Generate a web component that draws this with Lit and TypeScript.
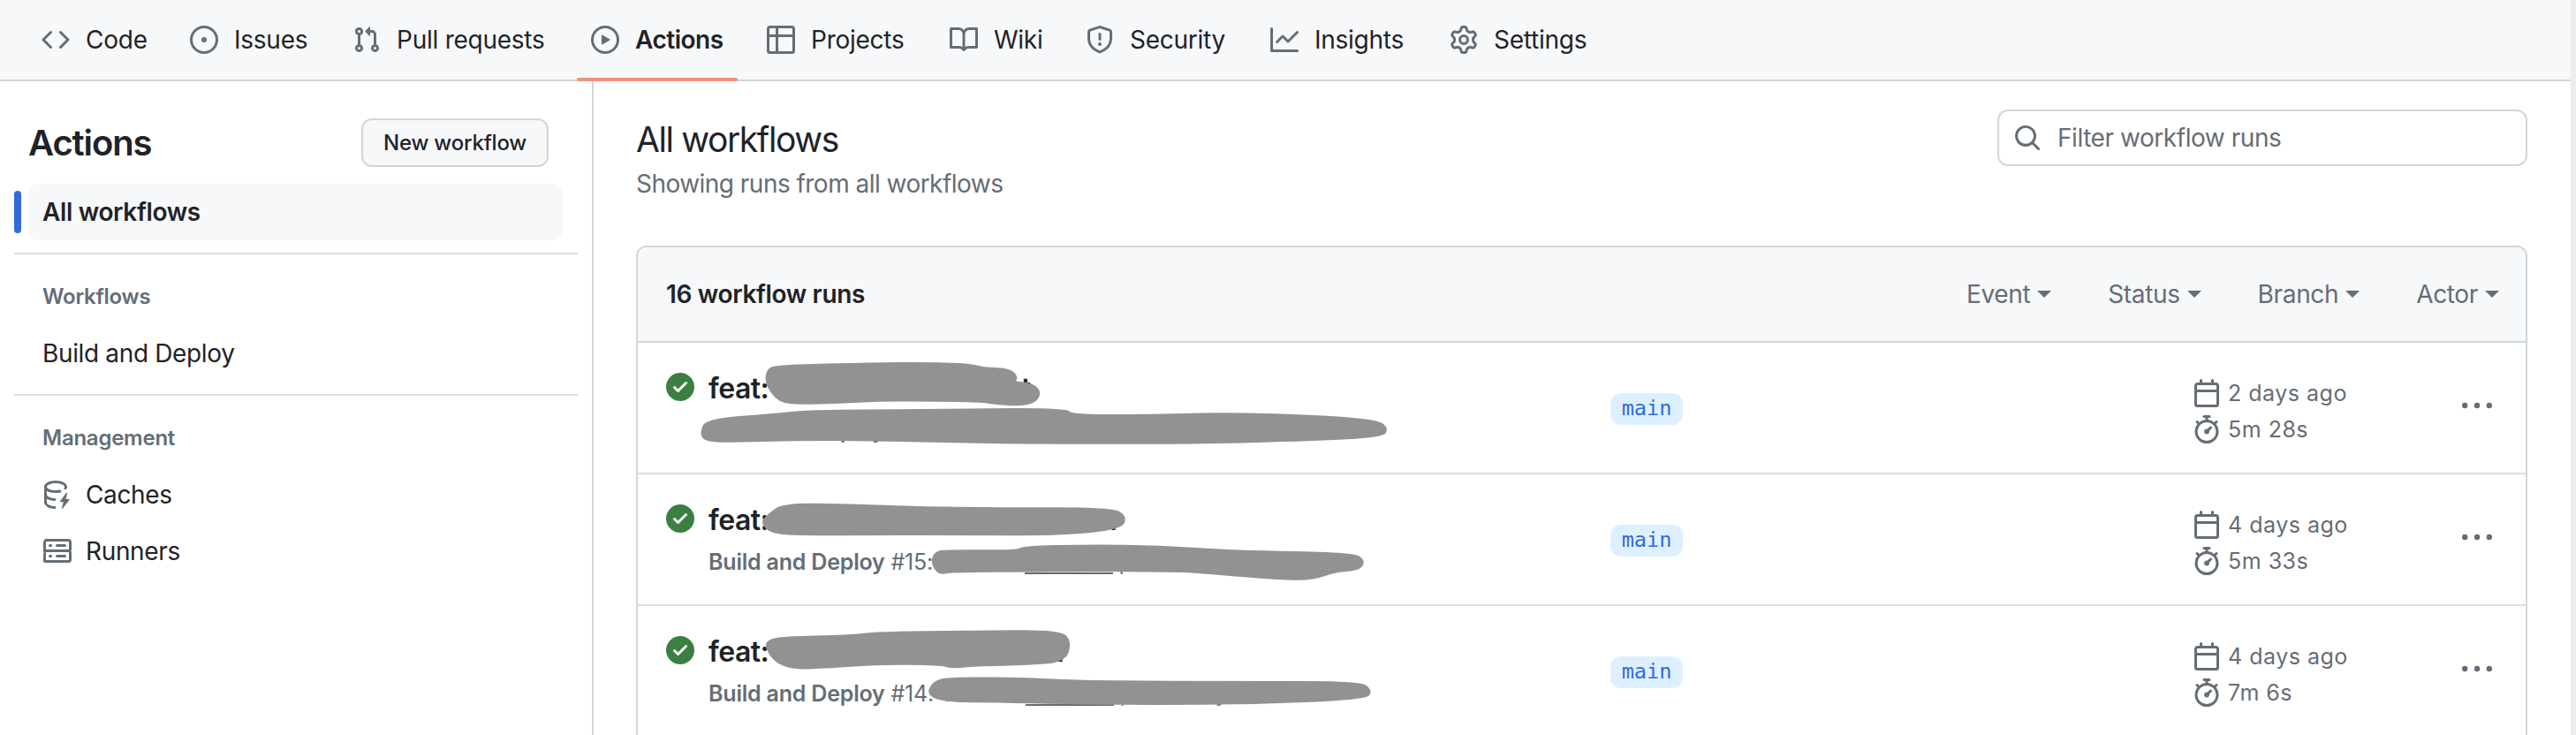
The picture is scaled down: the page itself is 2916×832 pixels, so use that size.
import { LitElement, html, css, svg } from "lit";
import { customElement } from "lit/decorators.js";

const P: Record<string, ReturnType<typeof svg>> = {
  code: svg`<path d="m11.28 3.22 4.25 4.25a.75.75 0 0 1 0 1.06l-4.25 4.25a.749.749 0 0 1-1.06-1.06L13.94 8l-3.72-3.72a.749.749 0 0 1 1.06-1.06Zm-6.56 0a.75.75 0 0 1 1.06 1.06L2.06 8l3.72 3.72a.749.749 0 0 1-1.06 1.06L.47 8.53a.75.75 0 0 1 0-1.06Z"/>`,
  issue: svg`<path d="M8 9.5a1.5 1.5 0 1 0 0-3 1.5 1.5 0 0 0 0 3Z"/><path d="M8 0a8 8 0 1 1 0 16A8 8 0 0 1 8 0ZM1.5 8a6.5 6.5 0 1 0 13 0 6.5 6.5 0 0 0-13 0Z"/>`,
  pr: svg`<path d="M1.5 3.25a2.25 2.25 0 1 1 3 2.122v5.256a2.251 2.251 0 1 1-1.5 0V5.372A2.25 2.25 0 0 1 1.5 3.25Zm5.677-.177L9.573.677A.25.25 0 0 1 10 .854V2.5h1A2.5 2.5 0 0 1 13.5 5v5.628a2.251 2.251 0 1 1-1.5 0V5a1 1 0 0 0-1-1h-1v1.646a.25.25 0 0 1-.427.177L7.177 3.427a.25.25 0 0 1 0-.354ZM3.75 2.5a.75.75 0 1 0 0 1.5.75.75 0 0 0 0-1.5Zm0 9.5a.75.75 0 1 0 0 1.5.75.75 0 0 0 0-1.5Zm8.25.75a.75.75 0 1 0 1.5 0 .75.75 0 0 0-1.5 0Z"/>`,
  play: svg`<path d="M8 0a8 8 0 1 1 0 16A8 8 0 0 1 8 0ZM1.5 8a6.5 6.5 0 1 0 13 0 6.5 6.5 0 0 0-13 0Zm4.879-2.773 4.264 2.559a.25.25 0 0 1 0 .428l-4.264 2.559A.25.25 0 0 1 6 10.559V5.442a.25.25 0 0 1 .379-.215Z"/>`,
  table: svg`<path d="M0 1.75C0 .784.784 0 1.75 0h12.5C15.216 0 16 .784 16 1.75v12.5A1.75 1.75 0 0 1 14.25 16H1.75A1.75 1.75 0 0 1 0 14.25ZM6.5 6.5v8h7.75a.25.25 0 0 0 .25-.25V6.5Zm8-1.5V1.75a.25.25 0 0 0-.25-.25H6.5V5Zm-13 1.5v7.75c0 .138.112.25.25.25H5v-8ZM5 5V1.5H1.75a.25.25 0 0 0-.25.25V5Z"/>`,
  book: svg`<path d="M0 1.75A.75.75 0 0 1 .75 1h4.253c1.227 0 2.317.59 3 1.501A3.743 3.743 0 0 1 11.006 1h4.245a.75.75 0 0 1 .75.75v10.5a.75.75 0 0 1-.75.75h-4.507a2.25 2.25 0 0 0-1.591.659l-.622.621a.75.75 0 0 1-1.06 0l-.622-.621A2.25 2.25 0 0 0 5.258 13H.75a.75.75 0 0 1-.75-.75Zm7.251 10.324.004-5.073-.002-2.253A2.25 2.25 0 0 0 5.003 2.5H1.5v9h3.757a3.75 3.75 0 0 1 1.994.574ZM8.755 4.75l-.004 7.322a3.752 3.752 0 0 1 1.992-.572H14.5v-9h-3.495a2.25 2.25 0 0 0-2.25 2.25Z"/>`,
  shield: svg`<path d="M7.467.133a1.748 1.748 0 0 1 1.066 0l5.25 1.68A1.75 1.75 0 0 1 15 3.48V7c0 1.566-.32 3.182-1.303 4.682-.983 1.498-2.585 2.813-5.032 3.855a1.697 1.697 0 0 1-1.33 0c-2.447-1.042-4.049-2.357-5.032-3.855C1.32 10.182 1 8.566 1 7V3.48a1.75 1.75 0 0 1 1.217-1.667Zm.61 1.429a.25.25 0 0 0-.153 0l-5.25 1.68a.25.25 0 0 0-.174.238V7c0 1.358.275 2.666 1.057 3.86.784 1.194 2.121 2.34 4.366 3.297a.196.196 0 0 0 .154 0c2.245-.956 3.582-2.104 4.366-3.298C13.225 9.666 13.5 8.36 13.5 7V3.48a.251.251 0 0 0-.174-.237l-5.25-1.68ZM8.75 4.75v3a.75.75 0 0 1-1.5 0v-3a.75.75 0 0 1 1.5 0ZM9 10.5a1 1 0 1 1-2 0 1 1 0 0 1 2 0Z"/>`,
  graph: svg`<path d="M1.5 1.75V13.5h13.75a.75.75 0 0 1 0 1.5H.75a.75.75 0 0 1-.75-.75V1.75a.75.75 0 0 1 1.5 0Zm14.28 2.53-5.25 5.25a.75.75 0 0 1-1.06 0L7 7.06 4.28 9.78a.751.751 0 0 1-1.042-.018.751.751 0 0 1-.018-1.042l3.25-3.25a.75.75 0 0 1 1.06 0L10 7.94l4.72-4.72a.751.751 0 0 1 1.042.018.751.751 0 0 1 .018 1.042Z"/>`,
  gear: svg`<path d="M8 0a8.2 8.2 0 0 1 .701.031C9.444.095 9.99.645 10.16 1.29l.288 1.107c.018.066.079.158.212.224.231.114.454.243.668.386.123.082.233.09.299.071l1.103-.303c.644-.176 1.392.021 1.82.63.27.385.506.792.704 1.218.315.675.111 1.422-.364 1.891l-.814.806c-.049.048-.098.147-.088.294.016.257.016.515 0 .772-.01.147.038.246.088.294l.814.806c.475.469.679 1.216.364 1.891a7.977 7.977 0 0 1-.704 1.217c-.428.61-1.176.807-1.82.63l-1.102-.302c-.067-.019-.177-.011-.3.071a5.909 5.909 0 0 1-.668.386c-.133.066-.194.158-.211.224l-.29 1.106c-.168.646-.715 1.196-1.458 1.26a8.006 8.006 0 0 1-1.402 0c-.743-.064-1.289-.614-1.458-1.26l-.289-1.106c-.018-.066-.079-.158-.212-.224a5.738 5.738 0 0 1-.668-.386c-.123-.082-.233-.09-.299-.071l-1.103.303c-.644.176-1.392-.021-1.82-.63a8.12 8.12 0 0 1-.704-1.218c-.315-.675-.111-1.422.363-1.891l.815-.806c.05-.048.098-.147.088-.294a6.214 6.214 0 0 1 0-.772c.01-.147-.038-.246-.088-.294l-.815-.806C.635 6.045.431 5.298.746 4.623a7.92 7.92 0 0 1 .704-1.217c.428-.61 1.176-.807 1.82-.63l1.102.302c.067.019.177.011.3-.071.214-.143.437-.272.668-.386.133-.066.194-.158.211-.224l.29-1.106C6.009.645 6.556.095 7.299.03 7.53.01 7.764 0 8 0Zm-.571 1.525c-.036.003-.108.036-.137.146l-.289 1.105c-.147.561-.549.967-.998 1.189-.173.086-.34.183-.5.29-.417.278-.97.423-1.529.27l-1.103-.303c-.109-.03-.175.016-.195.045-.22.312-.412.644-.573.99-.014.031-.021.11.059.19l.815.806c.411.406.562.957.53 1.456a4.709 4.709 0 0 0 0 .582c.032.499-.119 1.05-.53 1.456l-.815.806c-.081.08-.073.159-.059.19.162.346.353.677.573.989.02.03.085.076.195.046l1.102-.303c.56-.153 1.113-.008 1.53.27.161.107.328.204.501.29.447.222.85.629.997 1.189l.289 1.105c.029.109.101.143.137.146a6.6 6.6 0 0 0 1.142 0c.036-.003.108-.036.137-.146l.289-1.105c.147-.561.549-.967.998-1.189.173-.086.34-.183.5-.29.417-.278.97-.423 1.529-.27l1.103.303c.109.029.175-.016.195-.045.22-.313.411-.644.573-.99.014-.031.021-.11-.059-.19l-.815-.806c-.411-.406-.562-.957-.53-1.456a4.709 4.709 0 0 0 0-.582c-.032-.499.119-1.05.53-1.456l.815-.806c.081-.08.073-.159.059-.19a6.464 6.464 0 0 0-.573-.989c-.02-.03-.085-.076-.195-.046l-1.102.303c-.56.153-1.113.008-1.53-.27a4.44 4.44 0 0 0-.501-.29c-.447-.222-.85-.629-.997-1.189l-.289-1.105c-.029-.11-.101-.143-.137-.146a6.6 6.6 0 0 0-1.142 0ZM11 8a3 3 0 1 1-6 0 3 3 0 0 1 6 0ZM9.5 8a1.5 1.5 0 1 0-3.001.001A1.5 1.5 0 0 0 9.5 8Z"/>`,
  cache: svg`<path d="M7 0C10.4 0 13.5 1.4 13.5 3.5c0 .5-.1.9-.4 1.3a.75.75 0 0 1-1.24-.84c.1-.16.14-.3.14-.46 0-.3-.3-.8-1.2-1.23C9.9 1.8 8.55 1.5 7 1.5s-2.9.3-3.8.77C2.3 2.7 2 3.2 2 3.5s.3.8 1.2 1.23C4.1 5.2 5.45 5.5 7 5.5c.8 0 1.55-.08 2.2-.22a.75.75 0 1 1 .32 1.46c-.78.17-1.62.26-2.52.26-1.96 0-3.75-.4-5-1.13V8c0 .3.26.75 1.13 1.2.82.42 2 .72 3.4.8a.75.75 0 1 1-.08 1.5c-1.57-.09-3-.44-4.05-.98L2 10.4v2.1c0 .3.26.75 1.13 1.2.82.42 2 .72 3.4.8a.75.75 0 1 1-.08 1.5c-1.57-.09-3-.44-4.05-.98C1.3 13.95.5 13.3.5 12.5v-9C.5 1.4 3.6 0 7 0Z"/><path d="m13 7-3.5 4.6a.3.3 0 0 0 .24.48H11.4l-.9 3.4c-.08.32.3.5.5.25l3.75-4.75a.3.3 0 0 0-.24-.48H12.8l.75-3.25c.07-.3-.35-.5-.55-.25Z"/>`,
  server: svg`<path d="M1.75 1h12.5c.966 0 1.75.784 1.75 1.75v4c0 .372-.116.717-.314 1 .198.283.314.628.314 1v4a1.75 1.75 0 0 1-1.75 1.75H1.75A1.75 1.75 0 0 1 0 13.75v-4c0-.372.116-.717.314-1a1.739 1.739 0 0 1-.314-1v-4C0 1.784.784 1 1.75 1ZM1.5 2.75v4c0 .138.112.25.25.25h12.5a.25.25 0 0 0 .25-.25v-4a.25.25 0 0 0-.25-.25H1.75a.25.25 0 0 0-.25.25Zm.25 5.75a.25.25 0 0 0-.25.25v4c0 .138.112.25.25.25h12.5a.25.25 0 0 0 .25-.25v-4a.25.25 0 0 0-.25-.25ZM7 4.75A.75.75 0 0 1 7.75 4h4.5a.75.75 0 0 1 0 1.5h-4.5A.75.75 0 0 1 7 4.75ZM7.75 10h4.5a.75.75 0 0 1 0 1.5h-4.5a.75.75 0 0 1 0-1.5ZM3 4.75A.75.75 0 0 1 3.75 4h.5a.75.75 0 0 1 0 1.5h-.5A.75.75 0 0 1 3 4.75ZM3.75 10h.5a.75.75 0 0 1 0 1.5h-.5a.75.75 0 0 1 0-1.5Z"/>`,
  search: svg`<path d="M10.68 11.74a6 6 0 0 1-7.922-8.982 6 6 0 0 1 8.982 7.922l3.04 3.04a.749.749 0 0 1-.326 1.275.749.749 0 0 1-.734-.215ZM11.5 7a4.499 4.499 0 1 0-8.997 0A4.499 4.499 0 0 0 11.5 7Z"/>`,
  check: svg`<path d="M8 16A8 8 0 1 1 8 0a8 8 0 0 1 0 16Zm3.78-9.72a.751.751 0 0 0-.018-1.042.751.751 0 0 0-1.042-.018L6.75 9.19 5.28 7.72a.751.751 0 0 0-1.042.018.751.751 0 0 0-.018 1.042l2 2a.75.75 0 0 0 1.06 0Z"/>`,
  calendar: svg`<path d="M4.75 0a.75.75 0 0 1 .75.75V2h5V.75a.75.75 0 0 1 1.5 0V2h1.25c.966 0 1.75.784 1.75 1.75v10.5A1.75 1.75 0 0 1 13.25 16H2.75A1.75 1.75 0 0 1 1 14.25V3.75C1 2.784 1.784 2 2.75 2H4V.75A.75.75 0 0 1 4.75 0ZM2.5 7.5v6.75c0 .138.112.25.25.25h10.5a.25.25 0 0 0 .25-.25V7.5Zm10.75-4H2.75a.25.25 0 0 0-.25.25V6h11V3.75a.25.25 0 0 0-.25-.25Z"/>`,
  stopwatch: svg`<path d="M5.75.75A.75.75 0 0 1 6.5 0h3a.75.75 0 0 1 0 1.5h-.75v1l-.001.041a6.724 6.724 0 0 1 3.464 1.435l.007-.006.75-.75a.749.749 0 0 1 1.275.326.749.749 0 0 1-.215.734l-.75.75-.006.007a6.75 6.75 0 1 1-10.548 0L2.72 5.03l-.75-.75a.751.751 0 0 1 .018-1.042.751.751 0 0 1 1.042-.018l.75.75.007.006A6.72 6.72 0 0 1 7.25 2.541V1.5H6.5a.75.75 0 0 1-.75-.75ZM8 14.5a5.25 5.25 0 1 0-.001-10.501A5.25 5.25 0 0 0 8 14.5Zm.389-6.7 1.33-1.33a.75.75 0 1 1 1.061 1.06L9.45 8.861A1.503 1.503 0 0 1 8 10.75a1.499 1.499 0 1 1 .389-2.95Z"/>`,
  kebab: svg`<path d="M8 9.5a1.5 1.5 0 1 0 0-3 1.5 1.5 0 0 0 0 3ZM1.5 9.5a1.5 1.5 0 1 0 0-3 1.5 1.5 0 0 0 0 3Zm13 0a1.5 1.5 0 1 0 0-3 1.5 1.5 0 0 0 0 3Z"/>`,
};

const icon = (name: string, cls = "") =>
  html`<svg class="icon ${cls}" viewBox="0 0 16 16" aria-hidden="true">${P[name]}</svg>`;

const TABS: [string, string, number][] = [
  ["code", "Code", 168],
  ["issue", "Issues", 184],
  ["pr", "Pull requests", 270],
  ["play", "Actions", 199],
  ["table", "Projects", 207],
  ["book", "Wiki", 154],
  ["shield", "Security", 209],
  ["graph", "Insights", 203],
  ["gear", "Settings", 200],
];

const RUNS = [
  { n: 16, date: "2 days ago", dur: "5m 28s", tail: "t", tailAt: 354 },
  { n: 15, date: "4 days ago", dur: "5m 33s", tail: "on", tailAt: 424 },
  { n: 14, date: "4 days ago", dur: "7m 6s", tail: "t", tailAt: 390 },
];

type Pt = [number, number];

// Redaction scribbles, traced as [x, y] in page pixels.
const scribble = (pts: Pt[], top: number) => {
  const p = pts.map(([x, y]): Pt => [720 + x / 1.568, top + y / 3]);
  const mid = (a: Pt, b: Pt): Pt => [(a[0] + b[0]) / 2, (a[1] + b[1]) / 2];
  const f = (a: Pt) => `${a[0].toFixed(1)} ${a[1].toFixed(1)}`;
  let d = `M${f(mid(p[p.length - 1], p[0]))}`;
  p.forEach((c, i) => {
    d += ` Q${f(c)} ${f(mid(c, p[(i + 1) % p.length]))}`;
  });
  return d + " Z";
};

const BLOBS: string[] = [
  scribble([[250,436],[350,430],[480,425],[590,428],[615,443],[660,445],[676,470],[667,490],[702,495],[716,522],[708,552],[680,564],[640,558],[610,550],[530,548],[440,547],[350,555],[270,559],[248,538],[232,490],[234,448]], 270),
  scribble([[128,617],[240,601],[310,587],[500,586],[762,580],[772,602],[900,604],[1040,596],[1200,604],[1314,620],[1332,645],[1324,670],[1200,682],[1000,692],[850,692],[680,692],[540,687],[350,679],[210,685],[124,688],[116,655]], 270),
  scribble([[236,100],[262,64],[380,67],[500,76],[640,79],[845,79],[868,105],[860,142],[760,163],[600,162],[420,162],[300,163],[242,158],[224,125]], 550),
  scribble([[532,228],[550,222],[675,224],[690,209],[800,205],[930,207],[1060,225],[1274,231],[1292,258],[1280,283],[1242,287],[1202,314],[1150,315],[1020,294],[960,286],[700,286],[555,288],[538,297],[526,260]], 550),
  scribble([[236,528],[260,517],[380,512],[430,500],[600,497],[752,494],[770,530],[760,593],[700,603],[600,607],[558,615],[542,603],[430,602],[330,615],[278,618],[246,592],[232,545]], 550),
  scribble([[530,666],[560,654],[700,657],[800,667],[1100,669],[1284,669],[1304,695],[1294,720],[1100,737],[900,738],[760,736],[640,730],[556,729],[518,710]], 550),
];

@customElement("app-root")
export class AppRoot extends LitElement {
  static styles = css`
    :host {
      display: flex;
      position: relative;
      width: 2916px;
      height: 832px;
      overflow: hidden;
      background: #fff;
      color: #1f2328;
      font-family: Inter, "Liberation Sans", sans-serif;
      font-size: 28px;
      --muted: #656d76;
      --line: #d0d7de;
      --soft: #d8dee4;
    }
    * {
      box-sizing: border-box;
    }
    .wrap {
      flex: 1;
      min-width: 0;
    }
    .scroll {
      width: 6px;
      flex: none;
      background: #ededed;
    }
    .icon {
      width: 32px;
      height: 32px;
      flex: none;
      fill: var(--muted);
      display: block;
    }
    .nav {
      height: 92px;
      background: #f6f8fa;
      border-bottom: 2px solid var(--line);
      display: flex;
      padding-left: 31px;
    }
    .tab {
      position: relative;
      display: flex;
      align-items: center;
      gap: 18px;
      padding-left: 16px;
      height: 90px;
      flex: none;
      letter-spacing: -0.25px;
      white-space: nowrap;
    }
    .tab.on {
      font-weight: 600;
      letter-spacing: -0.5px;
    }
    .tab.on::after {
      content: "";
      position: absolute;
      left: 0;
      right: 17px;
      bottom: -2px;
      height: 4px;
      border-radius: 2px;
      background: #f2917a;
    }
    .page {
      display: flex;
      height: 740px;
    }
    .side {
      width: 672px;
      flex: none;
      border-right: 2px solid var(--line);
      padding: 42px 16px 0;
    }
    .side-head {
      display: flex;
      align-items: center;
      justify-content: space-between;
      padding: 0 33px 0 16px;
      height: 55px;
    }
    .side-head h2 {
      margin: 0;
      font-size: 40px;
      font-weight: 600;
      letter-spacing: -1.1px;
    }
    .btn {
      width: 212px;
      height: 55px;
      display: flex;
      align-items: center;
      justify-content: center;
      background: #f6f8fa;
      border: 2px solid var(--line);
      border-radius: 12px;
      font-size: 24px;
      font-weight: 500;
      letter-spacing: -0.2px;
    }
    .item {
      display: flex;
      align-items: center;
      gap: 16px;
      height: 64px;
      padding-left: 32px;
      letter-spacing: -0.35px;
      white-space: nowrap;
    }
    .item .icon {
      margin-left: 1px;
    }
    .active {
      position: relative;
      margin: 19px 17px 0 16px;
      padding-left: 16px;
      background: #f6f8fa;
      border-radius: 12px;
      font-weight: 600;
    }
    .active::before {
      content: "";
      position: absolute;
      left: -16px;
      top: 8px;
      width: 8px;
      height: 48px;
      border-radius: 4px;
      background: #2f6bdd;
    }
    .sep {
      height: 2px;
      background: var(--soft);
      margin-top: 14px;
    }
    .group {
      color: var(--muted);
      font-size: 24px;
      font-weight: 600;
      letter-spacing: -0.25px;
      padding-left: 32px;
      margin: 33px 0 17px;
      line-height: 30px;
    }
    .main {
      flex: 1;
      padding: 32px 49px 0 48px;
      min-width: 0;
    }
    .main-head {
      display: flex;
      justify-content: space-between;
      align-items: flex-start;
      height: 154px;
    }
    .main-head h1 {
      margin: 0;
      font-size: 39px;
      font-weight: 400;
      line-height: 52px;
      letter-spacing: -1.4px;
      padding-top: 8px;
    }
    .main-head p {
      margin: 4px 0 0;
      color: var(--muted);
      line-height: 40px;
      letter-spacing: -0.53px;
    }
    .filter {
      width: 600px;
      height: 64px;
      border: 2px solid var(--line);
      border-radius: 12px;
      display: flex;
      align-items: center;
      gap: 18px;
      padding-left: 16px;
      color: var(--muted);
      letter-spacing: -0.45px;
    }
    .box {
      border: 2px solid var(--line);
      border-bottom: 0;
      border-radius: 12px 12px 0 0;
    }
    .box-head {
      height: 108px;
      background: #f6f8fa;
      border-bottom: 2px solid var(--line);
      border-radius: 10px 10px 0 0;
      display: flex;
      align-items: center;
      justify-content: space-between;
      padding: 0 30px 0 32px;
    }
    .box-head strong {
      font-weight: 600;
      letter-spacing: -0.35px;
    }
    .filters {
      display: flex;
      gap: 64px;
      color: var(--muted);
      letter-spacing: -0.35px;
    }
    .f {
      display: flex;
      align-items: center;
      gap: 8px;
    }
    .caret {
      width: 0;
      height: 0;
      border: 8px solid transparent;
      border-top-color: var(--muted);
      border-bottom: 0;
    }
    .row {
      display: grid;
      grid-template-columns: 1069px 659px 1fr 34px;
      height: 149px;
      padding: 0 38px 0 32px;
      border-bottom: 2px solid var(--soft);
    }
    .who {
      display: grid;
      grid-template-columns: 32px 1fr;
      column-gap: 16px;
      padding-top: 34px;
      align-content: start;
    }
    .title {
      position: relative;
      font-size: 32px;
      font-weight: 600;
      line-height: 36px;
      letter-spacing: -0.5px;
    }
    .tail {
      position: absolute;
      top: 0;
    }
    .check {
      fill: #3b7f42;
    }
    .sub {
      grid-column: 2;
      margin-top: 14px;
      font-size: 25px;
      line-height: 30px;
      color: var(--muted);
      letter-spacing: -0.2px;
      white-space: nowrap;
    }
    .sub b {
      font-weight: 600;
    }
    .sha {
      display: inline-block;
      vertical-align: top;
      width: 100px;
      height: 29px;
      border-bottom: 2px solid var(--muted);
    }
    .redact {
      position: absolute;
      left: 0;
      top: 0;
      width: 2916px;
      height: 832px;
      fill: #929292;
      stroke: #929292;
      stroke-width: 4px;
      stroke-linejoin: round;
      pointer-events: none;
    }
    .cell {
      padding-top: 57px;
    }
    .branch {
      display: block;
      width: 82px;
      height: 36px;
      text-align: center;
      font-family: "DejaVu Sans Mono", "Liberation Mono", monospace;
      font-size: 23.5px;
      line-height: 34px;
      color: #2f6bdd;
      background: #def0ff;
      border-radius: 12px;
    }
    .meta {
      padding-top: 41px;
      color: var(--muted);
      font-size: 25px;
      line-height: 32px;
      letter-spacing: 0.5px;
      display: flex;
      flex-direction: column;
      gap: 9px;
      white-space: nowrap;
    }
    .meta div {
      display: flex;
      align-items: center;
      gap: 8px;
    }
    .more {
      padding-top: 54px;
    }
    .more .icon {
      width: 34px;
      height: 34px;
    }
  `;

  render() {
    return html`
      <div class="wrap">
        <nav class="nav">
          ${TABS.map(
            ([i, t, w]) =>
              html`<div class="tab ${t === "Actions" ? "on" : ""}" style="width:${w}px">${icon(i)}<span>${t}</span></div>`,
          )}
        </nav>
        <div class="page">
          <aside class="side">
            <div class="side-head">
              <h2>Actions</h2>
              <div class="btn">New workflow</div>
            </div>
            <div class="item active">All workflows</div>
            <div class="sep"></div>
            <div class="group">Workflows</div>
            <div class="item">Build and Deploy</div>
            <div class="sep"></div>
            <div class="group">Management</div>
            <div class="item">${icon("cache")}Caches</div>
            <div class="item">${icon("server")}Runners</div>
          </aside>
          <main class="main">
            <div class="main-head">
              <div>
                <h1>All workflows</h1>
                <p>Showing runs from all workflows</p>
              </div>
              <div class="filter">${icon("search")}Filter workflow runs</div>
            </div>
            <div class="box">
              <div class="box-head">
                <strong>16 workflow runs</strong>
                <div class="filters">
                  ${["Event", "Status", "Branch", "Actor"].map(
                    (f) => html`<div class="f">${f}<i class="caret"></i></div>`,
                  )}
                </div>
              </div>
              ${RUNS.map(
                (r) => html`
                  <div class="row">
                    <div class="who">
                      ${icon("check", "check")}
                      <div class="title">
                        feat:
                        <span class="tail" style="left:${r.tailAt}px">${r.tail}</span>
                      </div>
                      <div class="sub">
                        <b>Build and Deploy</b> #${r.n}: Commit
                        <span class="sha"></span> pushed by
                      </div>
                    </div>
                    <div class="cell"><span class="branch">main</span></div>
                    <div class="meta">
                      <div>${icon("calendar")}${r.date}</div>
                      <div>${icon("stopwatch")}${r.dur}</div>
                    </div>
                    <div class="more">${icon("kebab")}</div>
                  </div>
                `,
              )}
            </div>
          </main>
        </div>
      </div>
      <div class="scroll"></div>
      <svg class="redact" viewBox="0 0 2916 832" aria-hidden="true">
        ${BLOBS.map((d) => svg`<path d=${d} />`)}
      </svg>
    `;
  }
}
